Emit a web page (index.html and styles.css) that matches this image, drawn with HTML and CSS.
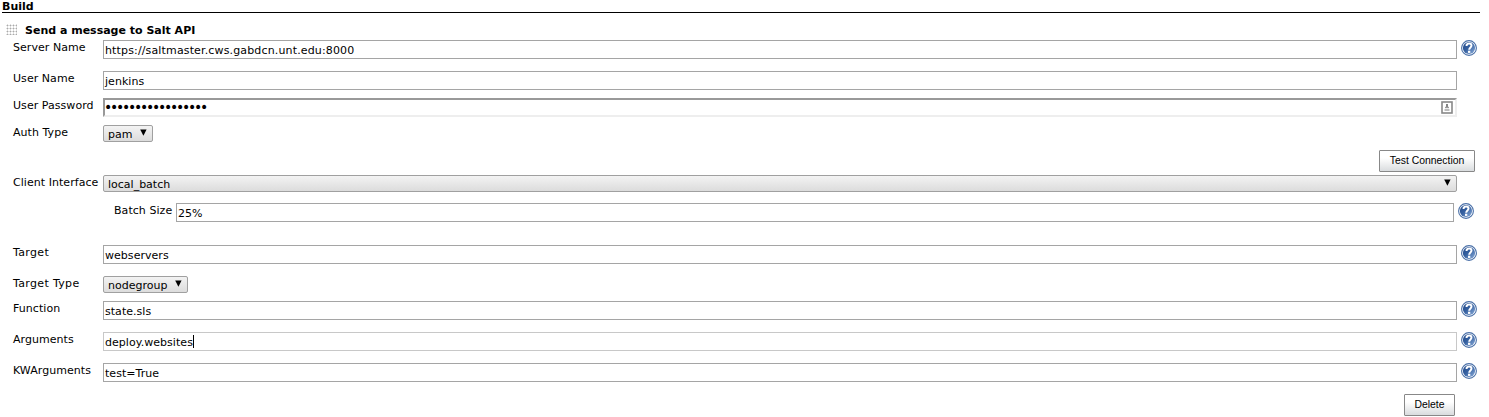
FILE: index.html
```
<!DOCTYPE html>
<html lang="en">
<head>
<meta charset="utf-8">
<title>Build</title>
<link rel="stylesheet" href="styles.css">
</head>
<body>
<svg class="defs" width="0" height="0">
  <defs>
    <linearGradient id="blue" x1="0" y1="0" x2="1" y2="1">
      <stop offset="0" stop-color="#22498a"/>
      <stop offset=".45" stop-color="#3560a0"/>
      <stop offset="1" stop-color="#8fb0dc"/>
    </linearGradient>
    <symbol id="help" viewBox="0 0 16 16">
      <circle cx="8" cy="8" r="7.4" fill="#fff" stroke="#4a70a8" stroke-width="1.1"/>
      <circle cx="8" cy="8" r="6.1" fill="url(#blue)"/>
      <path d="M5.6 6V5C6.1 3.8 7 3.5 8.1 3.5C9.7 3.5 10.5 4.4 10.5 5.6C10.5 7.4 8.3 7.4 8.2 9.7" fill="none" stroke="#fff" stroke-width="2"/>
      <rect x="7" y="10.7" width="2.3" height="2.2" fill="#fff"/>
    </symbol>
    <symbol id="arrow" viewBox="0 0 7 7"><path d="M.2 .5H6.6L3.4 6.8Z" fill="#000"/></symbol>
  </defs>
</svg>
<h1 class="section">Build</h1>
<div class="builder">
  <span class="grip"></span>
  <b class="title">Send a message to Salt API</b>
</div>
<main class="form">
  <div class="row"><label class="label">Server Name</label><div class="input url">https://saltmaster.cws.gabdcn.unt.edu:8000</div><svg class="help"><use href="#help"/></svg></div>
  <div class="row snug"><label class="label">User Name</label><div class="input">jenkins</div></div>
  <div class="row snug"><label class="label">User Password</label><div class="input password"><span class="dots">•••••••••••••••••</span>
    <svg class="key" viewBox="0 0 12 13"><rect x="1" y="1" width="10" height="11" fill="#fff" stroke="#888" stroke-width="1.6"/><path d="M6 3V6" stroke="#777" stroke-width="1.8"/><path d="M4 6.5H8" stroke="#999" stroke-width="1.4"/><path d="M3.5 9H8.5" stroke="#aaa" stroke-width="1.6"/></svg></div></div>
  <div class="row select-row auth"><label class="label">Auth Type</label><div class="select pam"><span>pam</span><svg class="arrow"><use href="#arrow"/></svg></div></div>
  <div class="test"><button class="button">Test Connection</button></div>
  <div class="row select-row client"><label class="label">Client Interface</label><div class="select"><span>local_batch</span><svg class="arrow"><use href="#arrow"/></svg></div></div>
  <div class="row nested"><label class="label">Batch Size</label><div class="input">25%</div><svg class="help"><use href="#help"/></svg></div>
  <div class="row"><label class="label wide">Target</label><div class="input">webservers</div><svg class="help"><use href="#help"/></svg></div>
  <div class="row select-row"><label class="label wide">Target Type</label><div class="select nodegroup"><span>nodegroup</span><svg class="arrow"><use href="#arrow"/></svg></div></div>
  <div class="row"><label class="label">Function</label><div class="input">state.sls</div><svg class="help"><use href="#help"/></svg></div>
  <div class="row"><label class="label">Arguments</label><div class="input active">deploy.websites<span class="caret"></span></div><svg class="help"><use href="#help"/></svg></div>
  <div class="row"><label class="label">KWArguments</label><div class="input">test=True</div><svg class="help"><use href="#help"/></svg></div>
  <div class="delete"><button class="button">Delete</button></div>
</main>
</body>
</html>
```
FILE: styles.css
```
* { box-sizing: border-box; }
body { margin: 0; height: 417px; overflow: hidden; background: #fff; color: #000; font: 11px/13px "DejaVu Sans", Verdana, sans-serif; }
.defs { display: block; }
.section { margin: 0 9px 0 2px; height: 13px; border-bottom: 1px solid #000; font-size: 11px; line-height: 13px; }
.builder { display: flex; height: 27px; padding: 11px 0 0 6px; }
.grip { width: 11px; height: 11px; margin-right: 8px; background: radial-gradient(circle at 1.5px 1.5px, #aaa 0, #aaa .7px, transparent 1.2px) 0 0 / 3px 3px; }
.row { display: grid; grid-template-columns: 90px 1354px 16px; padding-left: 13px; height: 19px; margin-bottom: 12px; }
.snug { margin-bottom: 8px; }
.select-row { height: 17px; margin-bottom: 8px; }
.label { padding-top: 1px; white-space: nowrap; letter-spacing: .05px; }
.wide { letter-spacing: .34px; }
.input { display: flex; height: 19px; border: 1px solid #a5a5a5; padding: 3px 1px 0; white-space: nowrap; letter-spacing: .04px; }
.url { letter-spacing: .147px; }
.password { border: 2px solid #999; border-right-color: #eee; border-bottom-color: #eee; padding: 1px 2px 0 0; justify-content: space-between; }
.dots { font-size: 14px; letter-spacing: -2.26px; margin-left: -1px; }
.key { width: 12px; height: 13px; }
.active { border-color: #c8c8c8; }
.caret { width: 1px; height: 13px; margin-top: -1px; background: #000; }
.help { width: 16px; height: 16px; margin-left: 4px; }
.select { display: flex; justify-content: space-between; height: 17px; border: 1px solid #a0a0a0; border-radius: 2px; background: linear-gradient(#f3f3f3, #dcdcdc); padding: 2px 5px 0 4px; }
.arrow { width: 7px; height: 7px; margin-top: 1px; }
.pam { width: 50px; }
.nodegroup { width: 85px; }
.test { height: 25px; padding-right: 14px; display: flex; justify-content: flex-end; align-items: flex-start; }
.button { width: 96px; height: 22px; padding: 0 0 1px; border: 1px solid #888; border-radius: 1px; background: linear-gradient(#fff 35%, #d9dcde); font: 10.4px/18px "Liberation Sans", Arial, sans-serif; color: #000; }
.client { margin-bottom: 11px; }
.nested { grid-template-columns: 62px 1278px 16px; padding-left: 114px; margin-bottom: 23px; }
.delete { display: flex; justify-content: flex-end; padding-right: 34px; }
.delete .button { width: 51px; }
```
